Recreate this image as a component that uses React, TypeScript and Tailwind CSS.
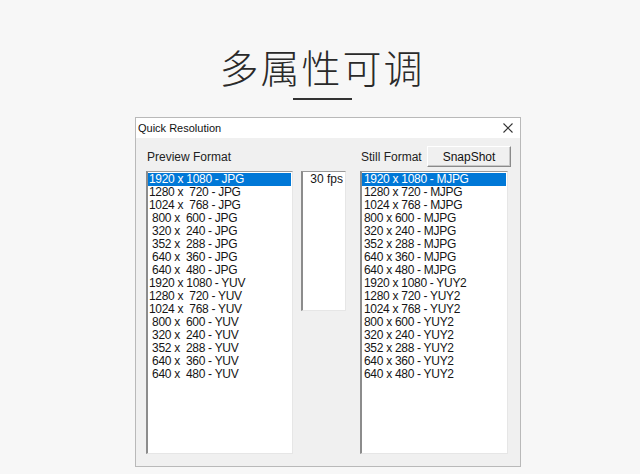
const previewFormats = [
  "1920 x 1080 - JPG",
  "1280 x  720 - JPG",
  "1024 x  768 - JPG",
  " 800 x  600 - JPG",
  " 320 x  240 - JPG",
  " 352 x  288 - JPG",
  " 640 x  360 - JPG",
  " 640 x  480 - JPG",
  "1920 x 1080 - YUV",
  "1280 x  720 - YUV",
  "1024 x  768 - YUV",
  " 800 x  600 - YUV",
  " 320 x  240 - YUV",
  " 352 x  288 - YUV",
  " 640 x  360 - YUV",
  " 640 x  480 - YUV",
];

const stillFormats = [
  "1920 x 1080 - MJPG",
  "1280 x 720 - MJPG",
  "1024 x 768 - MJPG",
  "800 x 600 - MJPG",
  "320 x 240 - MJPG",
  "352 x 288 - MJPG",
  "640 x 360 - MJPG",
  "640 x 480 - MJPG",
  "1920 x 1080 - YUY2",
  "1280 x 720 - YUY2",
  "1024 x 768 - YUY2",
  "800 x 600 - YUY2",
  "320 x 240 - YUY2",
  "352 x 288 - YUY2",
  "640 x 360 - YUY2",
  "640 x 480 - YUY2",
];

const ListBox = ({ items, textPad }: { items: string[]; textPad: string }) => (
  <div className="h-[283px] w-full border-l-2 border-t border-r border-b border-l-[#8c8c8c] border-t-[#9a9a9a] border-r-[#e6e6e6] border-b-[#e6e6e6] bg-white">
    <ul className="pt-[1px]">
      {items.map((item, i) => (
        <li
          key={item}
          className={`h-[13px] whitespace-pre text-[12px] leading-[13px] tracking-[-0.3px] ${textPad} ${
            i === 0 ? "mr-[1px] bg-[#0078d7] text-white" : "text-[#151515]"
          }`}
        >
          {item}
        </li>
      ))}
    </ul>
  </div>
);

export default function App() {
  return (
    <div className="flex h-[474px] w-[640px] flex-col items-center bg-[#f7f7f7] font-['Liberation_Sans',Arial,sans-serif]">
      <h1 className="ml-[4px] mt-[42px] font-['Noto_Sans_CJK_SC',sans-serif] text-[39px] font-light leading-[48px] tracking-[2px] text-[#2a2a2a]">
        多属性可调
      </h1>
      <div className="ml-[5px] mt-[8px] h-[2px] w-[59px] bg-[#333]" />

      <div className="ml-[16px] mt-[17px] flex h-[350px] w-[386px] flex-col border border-[#b9b9b9] bg-[#f0f0f0]">
        <div className="flex h-[20px] items-center justify-between bg-white pl-[2px] pr-[7px]">
          <span className="text-[11px] text-[#111]">Quick Resolution</span>
          <svg width="10" height="10" viewBox="0 0 10 10" className="text-[#333]">
            <path d="M0.5 0.5 L9.5 9.5 M9.5 0.5 L0.5 9.5" stroke="currentColor" strokeWidth="1.1" />
          </svg>
        </div>

        <div className="flex flex-1 flex-col pl-[10px] pr-[11px]">
          <div className="mb-[4px] mt-[8px] flex h-[21px] items-center">
            <span className="w-[214px] pl-[1px] text-[12px] text-[#222]">Preview Format</span>
            <div className="flex w-[148px] items-center justify-between pl-[1px]">
              <span className="text-[12px] text-[#222]">Still Format</span>
              <button className="-mr-[3px] h-[21px] w-[84px] border border-t-white border-l-white border-r-[#8a8a8a] border-b-[#8a8a8a] bg-[#f0f0f0] text-[12px] text-[#111] shadow-[inset_-1px_-1px_0_#c8c8c8]">
                SnapShot
              </button>
            </div>
          </div>

          <div className="flex items-start">
            <div className="w-[147px]">
              <ListBox items={previewFormats} textPad="pl-[1px]" />
            </div>
            <div className="ml-[8px] h-[140px] w-[45px] border-l-2 border-t border-r border-b border-l-[#8c8c8c] border-t-[#9a9a9a] border-r-[#e6e6e6] border-b-[#e6e6e6] bg-white pr-[2px] pt-[1px] text-right text-[12px] leading-[13px] text-[#151515]">
              30 fps
            </div>
            <div className="ml-[14px] w-[148px]">
              <ListBox items={stillFormats} textPad="pl-[2px]" />
            </div>
          </div>
        </div>
      </div>
    </div>
  );
}
